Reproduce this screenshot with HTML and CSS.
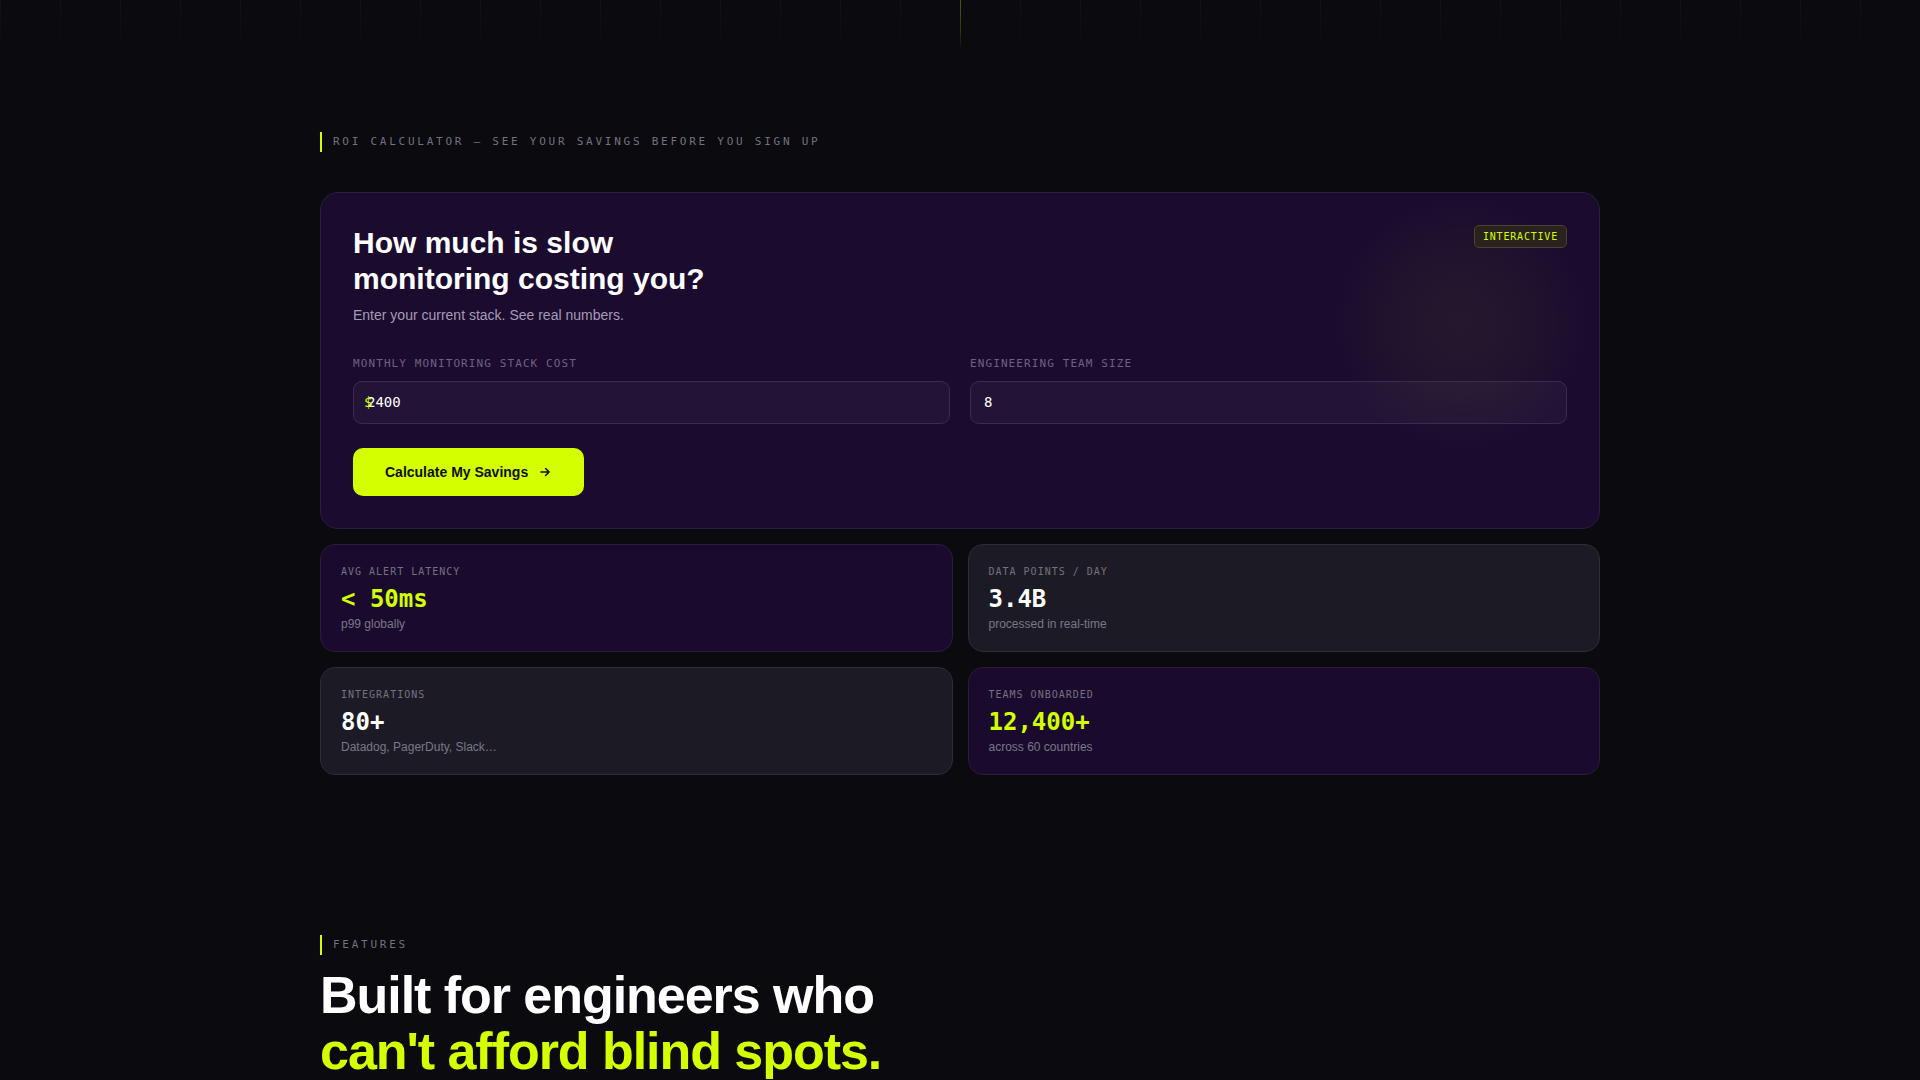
FILE: index.html
```html
<!DOCTYPE html>
<html lang="en">
<head>
<meta charset="utf-8">
<title>ROI Calculator</title>
<link rel="stylesheet" href="styles.css">
</head>
<body>
<div class="grid-strip"><span class="grid-center"></span></div>

<section class="roi">
  <div class="eyebrow">ROI CALCULATOR — SEE YOUR SAVINGS BEFORE YOU SIGN UP</div>

  <div class="calc-card">
    <div class="glow"></div>
    <span class="badge">INTERACTIVE</span>
    <h2 class="calc-title">How much is slow monitoring costing you?</h2>
    <p class="calc-sub">Enter your current stack. See real numbers.</p>

    <div class="fields">
      <div class="field">
        <label class="field-label">MONTHLY MONITORING STACK COST</label>
        <div class="input-wrap">
          <span class="prefix">$</span>
          <div class="input">2400</div>
        </div>
      </div>
      <div class="field">
        <label class="field-label">ENGINEERING TEAM SIZE</label>
        <div class="input-wrap">
          <div class="input">8</div>
        </div>
      </div>
    </div>

    <button class="cta">Calculate My Savings
      <svg width="14" height="14" viewBox="0 0 24 24" fill="none" stroke="currentColor" stroke-width="2.6" stroke-linecap="round" stroke-linejoin="round"><path d="M5 12h14M13 6l6 6-6 6"/></svg>
    </button>
  </div>

  <div class="stats">
    <div class="stat stat-purple">
      <div class="stat-label">AVG ALERT LATENCY</div>
      <div class="stat-value lime">&lt; 50ms</div>
      <div class="stat-sub">p99 globally</div>
    </div>
    <div class="stat stat-gray">
      <div class="stat-label">DATA POINTS / DAY</div>
      <div class="stat-value">3.4B</div>
      <div class="stat-sub">processed in real-time</div>
    </div>
    <div class="stat stat-gray">
      <div class="stat-label">INTEGRATIONS</div>
      <div class="stat-value">80+</div>
      <div class="stat-sub">Datadog, PagerDuty, Slack…</div>
    </div>
    <div class="stat stat-purple">
      <div class="stat-label">TEAMS ONBOARDED</div>
      <div class="stat-value lime">12,400+</div>
      <div class="stat-sub">across 60 countries</div>
    </div>
  </div>
</section>

<section class="features">
  <div class="eyebrow eyebrow-tight">FEATURES</div>
  <h2 class="features-title">Built for engineers who<br><span class="lime">can't afford blind spots.</span></h2>
</section>
</body>
</html>
```
FILE: styles.css
```css
* { box-sizing: border-box; }

html, body {
  margin: 0;
  padding: 0;
  background: #0a0a0f;
  color: #fff;
  font-family: "Liberation Sans", Arial, sans-serif;
  overflow: hidden;
}

.grid-strip {
  position: relative;
  height: 50px;
  background-image: repeating-linear-gradient(90deg, rgba(255,255,255,0.03) 0 1px, transparent 1px 60px);
  background-position: 60px 0;
  -webkit-mask-image: linear-gradient(180deg, #000 0%, rgba(0,0,0,0.6) 60%, transparent 100%);
  mask-image: linear-gradient(180deg, #000 0%, rgba(0,0,0,0.6) 60%, transparent 100%);
}
.grid-center {
  position: absolute;
  left: 960px;
  top: 0;
  width: 1px;
  height: 50px;
  background: rgba(212,255,0,0.3);
}

.roi {
  width: 1280px;
  margin: 0 auto;
  padding-top: 82px;
}

.eyebrow {
  font-family: "DejaVu Sans Mono", "Liberation Mono", monospace;
  font-size: 11px;
  line-height: 20px;
  letter-spacing: 0.25em;
  color: #75717f;
  border-left: 2px solid #d4ff00;
  padding-left: 11px;
  margin-bottom: 40px;
}

.calc-card {
  position: relative;
  overflow: hidden;
  background: #1b0b2f;
  border: 1px solid #2b1f3c;
  border-radius: 18px;
  padding: 32px;
}
.glow {
  position: absolute;
  left: 1010px;
  top: 0;
  width: 260px;
  height: 260px;
  border-radius: 50%;
  background: radial-gradient(circle, rgba(212,255,0,0.055) 0%, rgba(212,255,0,0.03) 40%, transparent 70%);
  pointer-events: none;
}
.badge {
  position: absolute;
  top: 32px;
  right: 32px;
  height: 23px;
  line-height: 21px;
  padding: 0 8px;
  font-family: "DejaVu Sans Mono", "Liberation Mono", monospace;
  font-size: 10px;
  letter-spacing: 0.08em;
  color: #d4ff00;
  background: #29221d;
  border: 1px solid #4a4330;
  border-radius: 5px;
}
.calc-title {
  margin: 0;
  max-width: 400px;
  font-size: 30px;
  line-height: 36px;
  font-weight: 700;
  color: #fff;
}
.calc-sub {
  margin: 8px 0 31px;
  font-size: 14px;
  line-height: 20px;
  color: #a59bb6;
}

.fields {
  display: grid;
  grid-template-columns: 1fr 1fr;
  gap: 20px;
}
.field-label {
  display: block;
  font-family: "DejaVu Sans Mono", "Liberation Mono", monospace;
  font-size: 11px;
  line-height: 16px;
  letter-spacing: 0.1em;
  color: #6d6380;
  margin-bottom: 9px;
}
.input-wrap { position: relative; }
.prefix {
  position: absolute;
  left: 11px;
  top: 0;
  line-height: 43px;
  font-family: "DejaVu Sans Mono", "Liberation Mono", monospace;
  font-size: 14px;
  color: #d4ff00;
}
.input {
  height: 43px;
  line-height: 41px;
  padding: 0 13px;
  font-family: "DejaVu Sans Mono", "Liberation Mono", monospace;
  font-size: 14px;
  color: #fff;
  background: rgba(255,255,255,0.035);
  border: 1px solid #3a2b50;
  border-radius: 9px;
}

.cta {
  display: inline-flex;
  align-items: center;
  gap: 10px;
  margin-top: 24px;
  height: 48px;
  padding: 0 32px;
  border: 0;
  border-radius: 10px;
  background: #d4ff00;
  color: #0f0f14;
  font-family: "Liberation Sans", Arial, sans-serif;
  font-size: 14px;
  font-weight: 700;
}

.stats {
  display: grid;
  grid-template-columns: 1fr 1fr;
  gap: 15px;
  margin-top: 15px;
}
.stat {
  border-radius: 15px;
  padding: 20px;
  height: 108px;
}
.stat-purple { background: #1a0b2e; border: 1px solid #2b1d3e; }
.stat-gray { background: #1c1b25; border: 1px solid #2d2c37; }
.stat-label {
  font-family: "DejaVu Sans Mono", "Liberation Mono", monospace;
  font-size: 10px;
  line-height: 14px;
  letter-spacing: 0.1em;
  color: #77717f;
}
.stat-value {
  margin-top: 5px;
  font-family: "DejaVu Sans Mono", "Liberation Mono", monospace;
  font-size: 24px;
  line-height: 30px;
  font-weight: 700;
  color: #fff;
}
.stat-sub {
  margin-top: 1px;
  font-size: 12px;
  line-height: 18px;
  color: #7b7786;
}
.lime { color: #d4ff00; }
.stat-value.lime { color: #d4ff00; }

.features {
  width: 1280px;
  margin: 0 auto;
  padding-top: 160px;
}
.eyebrow-tight { margin-bottom: 12px; }
.features-title {
  margin: 0;
  font-size: 52px;
  line-height: 56px;
  font-weight: 700;
  letter-spacing: -0.02em;
  color: #fff;
}
```
